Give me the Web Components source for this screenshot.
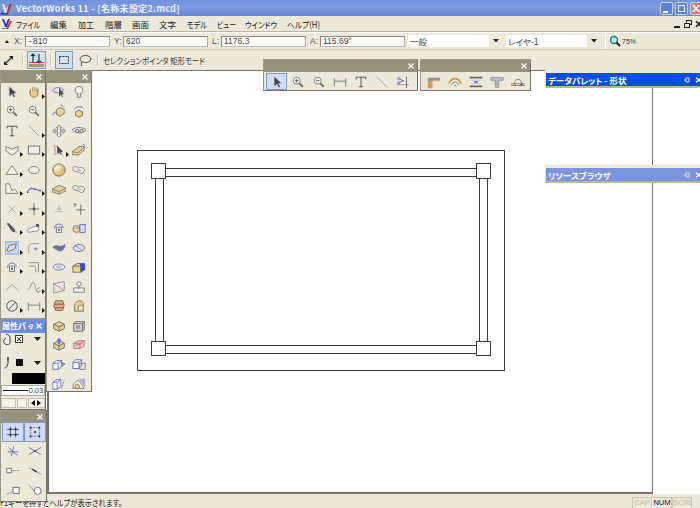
<!DOCTYPE html>
<html lang="ja"><head><meta charset="utf-8"><title>VectorWorks 11</title>
<style>html,body{margin:0;padding:0;width:700px;height:508px;overflow:hidden;background:#ece9d8;font-family:"Liberation Sans","Noto Sans CJK JP",sans-serif}</style></head>
<body>
<vw-app>
  <vw-titlebar slot="title">VectorWorks 11 - [名称未設定2.mcd]</vw-titlebar>
  <vw-menubar slot="menu">
    <vw-menu-item w="24" m="16">ファイル</vw-menu-item>
    <vw-menu-item w="17" m="10">編集</vw-menu-item>
    <vw-menu-item w="16" m="11">加工</vw-menu-item>
    <vw-menu-item w="17" m="11">階層</vw-menu-item>
    <vw-menu-item w="17" m="10">画面</vw-menu-item>
    <vw-menu-item w="17" m="10">文字</vw-menu-item>
    <vw-menu-item w="20" m="11">モデル</vw-menu-item>
    <vw-menu-item w="19" m="10">ビュー</vw-menu-item>
    <vw-menu-item w="32" m="9">ウインドウ</vw-menu-item>
    <vw-menu-item w="33" m="10">ヘルプ(H)</vw-menu-item>
  </vw-menubar>
  <vw-databar slot="data">
    <vw-field label="X:" lw="11" value="−810"></vw-field>
    <vw-field label="Y:" lw="9" value="620"></vw-field>
    <vw-field label="L:" lw="9" value="1176.3"></vw-field>
    <vw-field label="A:" lw="10" value="115.69°"></vw-field>
    <vw-select value="一般"></vw-select>
    <vw-select value="レイヤ-1"></vw-select>
    <vw-zoomview>75%</vw-zoomview>
  </vw-databar>
  <vw-modebar slot="mode">セレクションポインタ 矩形モード</vw-modebar>
  <vw-workspace slot="work">
    <vw-palette x="0" y="0" w="46" h="250" cols="22" close>
      <vw-tool i="arrow"></vw-tool><vw-tool i="hand" more></vw-tool>
      <vw-tool i="zin"></vw-tool><vw-tool i="zout"></vw-tool>
      <vw-tool i="text"></vw-tool><vw-tool i="line" more></vw-tool>
      <vw-tool i="shield" more></vw-tool><vw-tool i="rect" more></vw-tool>
      <vw-tool i="tri" more></vw-tool><vw-tool i="oval"></vw-tool>
      <vw-tool i="poly" more></vw-tool><vw-tool i="bcurve" more></vw-tool>
      <vw-tool i="x" more></vw-tool><vw-tool i="star" more></vw-tool>
      <vw-tool i="drop" more></vw-tool><vw-tool i="wedge" more></vw-tool>
      <vw-tool i="selp" more></vw-tool><vw-tool i="fillet" more></vw-tool>
      <vw-tool i="rot" more></vw-tool><vw-tool i="corner" more></vw-tool>
      <vw-tool i="chev"></vw-tool><vw-tool i="wave" more></vw-tool>
      <vw-tool i="slash" more></vw-tool><vw-tool i="dim" more></vw-tool>
    </vw-palette>
    <vw-palette x="46" y="0" w="46" h="322" cols="20" close>
      <vw-tool i="wand"></vw-tool><vw-tool i="bulb"></vw-tool>
      <vw-tool i="cubea"></vw-tool><vw-tool i="cubeb"></vw-tool>
      <vw-tool i="arrows"></vw-tool><vw-tool i="eye"></vw-tool>
      <vw-tool i="redarrow" more></vw-tool><vw-tool i="slab"></vw-tool>
      <vw-tool i="sphere"></vw-tool><vw-tool i="blob"></vw-tool>
      <vw-tool i="plate"></vw-tool><vw-tool i="blob"></vw-tool>
      <vw-tool i="small"></vw-tool><vw-tool i="starb"></vw-tool>
      <vw-tool i="rota"></vw-tool><vw-tool i="swatch"></vw-tool>
      <vw-tool i="leaf"></vw-tool><vw-tool i="lens"></vw-tool>
      <vw-tool i="lens2"></vw-tool><vw-tool i="bcube"></vw-tool>
      <vw-tool i="flag"></vw-tool><vw-tool i="book"></vw-tool>
      <vw-tool i="coil"></vw-tool><vw-tool i="roll"></vw-tool>
      <vw-tool i="cubec"></vw-tool><vw-tool i="cubed"></vw-tool>
      <vw-tool i="cubeup"></vw-tool><vw-tool i="pinkcube"></vw-tool>
      <vw-tool i="wire1"></vw-tool><vw-tool i="wire2"></vw-tool>
      <vw-tool i="wire3"></vw-tool><vw-tool i="pie"></vw-tool>
    </vw-palette>
    <vw-palette x="0" y="248" w="46" h="92" cols="46" title="属性パ" pin blue close>
      <vw-attrs></vw-attrs>
    </vw-palette>
    <vw-palette x="0" y="340" w="47" h="92" cols="22" close>
      <vw-tool i="snapgrid" on></vw-tool><vw-tool i="snappt" on></vw-tool>
      <vw-tool i="snapstar"></vw-tool><vw-tool i="snapx"></vw-tool>
      <vw-tool i="snapdash"></vw-tool><vw-tool i="snapline"></vw-tool>
      <vw-tool i="snapbox"></vw-tool><vw-tool i="snaphex"></vw-tool>
    </vw-palette>
    <vw-palette x="263" y="-11" w="155" h="32" cols="21" close wide>
      <vw-tool i="arrow" on></vw-tool><vw-tool i="zin"></vw-tool><vw-tool i="zout"></vw-tool><vw-tool i="dim"></vw-tool><vw-tool i="text"></vw-tool><vw-tool i="line"></vw-tool><vw-tool i="trim"></vw-tool>
    </vw-palette>
    <vw-palette x="420" y="-11" w="111" h="32" cols="21" close wide>
      <vw-tool i="wall"></vw-tool><vw-tool i="arcw"></vw-tool><vw-tool i="ibeam"></vw-tool><vw-tool i="tbeam"></vw-tool><vw-tool i="join"></vw-tool>
    </vw-palette>
    <vw-dock y="0" w="155" active title="データパレット - 形状"></vw-dock>
    <vw-dock y="95" w="155" title="リソースブラウザ"></vw-dock>
    <vw-canvas></vw-canvas>
  </vw-workspace>
  <vw-statusbar slot="status">F1キーを押すとヘルプが表示されます。</vw-statusbar>
</vw-app>

<script>
const S='#555',B='#5a60d8',Y='#ecd090',P='#f4a0b0';
const cube=(f,t='#fff')=>`<path d="M2 6l6-3 6 3v5l-6 3-6-3z" fill="${f}" stroke="#666"/><path d="M2 6l6 3 6-3M8 9v5" fill="none" stroke="#666"/>`;
const ICONS={
arrow:`<path d="M5 2v11l3-3 2 4 1.500-.7-2-4h3.500z" fill="#444"/>`,
hand:`<path d="M4 8V4.500M6.500 7V2.500M9 7V2.500M11.500 8V4M4 8l-1.500-1M3 8c0 3 2 6 5 6s4.500-2 4.500-5V5" fill="${Y}" stroke="#8a7a40"/>`,
zin:`<circle cx="6.500" cy="6.500" r="4" fill="#f2f2ea" stroke="#777"/><path d="M9.500 9.500l4 4" stroke="#666" stroke-width="2"/><path d="M4.500 6.500h4M6.500 4.500v4" stroke="#555"/>`,
zout:`<circle cx="6.500" cy="6.500" r="4" fill="#f2f2ea" stroke="#777"/><path d="M9.500 9.500l4 4" stroke="#666" stroke-width="2"/><path d="M4.500 6.500h4" stroke="#555"/>`,
text:`<path d="M2.500 5V2.500h11V5M8 2.500v11M5.500 13.500h5" fill="none" stroke="#444"/>`,
line:`<path d="M2 2l12 12" stroke="#999"/>`,
shield:`<path d="M1 4l7 3 7-3v5l-7 5-7-5z" fill="#f2f0e4" stroke="#777"/>`,
rect:`<rect x="1.500" y="3.500" width="13" height="9" fill="#f2f0e4" stroke="#666"/>`,
tri:`<path d="M1 13L8 3l7 10z" fill="#f2f0e4" stroke="#777"/>`,
oval:`<ellipse cx="8" cy="8" rx="6" ry="4" fill="#f2f0e4" stroke="#777"/>`,
poly:`<path d="M1 2v11h14l-4-5-3 2-3-8z" fill="#f2f0e4" stroke="#777"/>`,
bcurve:`<path d="M0 12c3-6 5-5 8-4s4 1 8 2" fill="none" stroke="${B}" stroke-width="1.200"/><path d="M0 12h1.500M8 8h1.500M14 10h1.500" stroke="#222"/>`,
x:`<path d="M4 4l8 8M12 4l-8 8" stroke="#aaa"/>`,
star:`<path d="M8 1v14M2 8h12" stroke="#666"/><path d="M6.500 6.500h3v3h-3z" fill="#555"/>`,
drop:`<path d="M2 3l2-1 7 7 1 4-4-1z" fill="#555"/><path d="M11 10l3 4" stroke="#aaa"/>`,
wedge:`<path d="M1 13V9l9-3h3v5z" fill="#fff" stroke="#888"/><circle cx="12" cy="5" r="2" fill="#555"/>`,
selp:`<rect x="0" y="1" width="16" height="14" fill="#c8d8f4" stroke="#7a9ad8"/><path d="M2 11l3-6 8-2-2 6-7 3z" fill="#ddd" stroke="#666"/>`,
fillet:`<path d="M2 14V7c0-3 2-4 5-4h7" fill="none" stroke="#888"/><path d="M8 9h4M10 7v4" stroke="${B}"/>`,
rot:`<path d="M3 9a5 5 0 0 1 10-1" fill="none" stroke="${B}"/><rect x="5" y="7" width="6" height="6" fill="#f2f0e4" stroke="#777"/><circle cx="8" cy="10" r="1.400" fill="#668"/>`,
corner:`<path d="M2 3h11v11M2 7h6c2 0 2 2 2 7" fill="none" stroke="#888"/>`,
chev:`<path d="M1 12l7-7 7 7" fill="none" stroke="#999"/>`,
wave:`<path d="M1 11c3 0 3-8 6-8s2 9 4 8 3-3 4-2" fill="none" stroke="#888"/><path d="M10 12l3 2 2-2" fill="none" stroke="#666"/>`,
slash:`<circle cx="8" cy="8" r="6" fill="#f2f0e4" stroke="#666" stroke-width="1.200"/><path d="M4 12l8-8" stroke="#666" stroke-width="1.200"/>`,
dim:`<path d="M1.500 4v9M14.500 4v9M1.500 7h13" fill="none" stroke="#777"/>`,
trim:`<path d="M1 11h14" stroke="#999"/><path d="M12 2v13" stroke="#666"/><path d="M3 4l6 3M3 9l6-3" stroke="${B}"/><circle cx="3" cy="4" r="1.300" fill="#fff" stroke="${B}"/><circle cx="3" cy="9" r="1.300" fill="#fff" stroke="${B}"/>`,
wand:`<ellipse cx="7" cy="6" rx="6" ry="3" fill="none" stroke="${B}"/><path d="M8 3v10l2-2 1.500 3 1-.5-1.500-3h3z" fill="#555"/>`,
bulb:`<circle cx="8" cy="6" r="4.500" fill="#f4f2e2" stroke="#777"/><path d="M6 10v4h4v-4" fill="#ddd" stroke="#777"/>`,
cubea:`<path d="M5 7l4-3 5 2v5l-5 3-4-2z" fill="${Y}" stroke="#777"/><path d="M1 13c0-3 2-4 4-4M13 3l-3-2" fill="none" stroke="${B}"/>`,
cubeb:`<path d="M4 9l4-2 4 2v4l-4 2-4-2z" fill="${Y}" stroke="#666"/><path d="M3 6c0-3 8-4 10-1" fill="none" stroke="${B}"/>`,
arrows:`<path d="M8 1l3 3H9.500v3H13V5.500l2 2.500-2 2.500V9H9.500v3H11l-3 3-3-3h1.500V9H3v1.500L1 8l2-2.500V7h3.500V4H5z" fill="#f2f0e4" stroke="#777"/>`,
eye:`<path d="M0 7c3-4 13-4 16 0-3 4-13 4-16 0z" fill="#f2f0e4" stroke="#777"/><circle cx="6" cy="8" r="2" fill="#ddd" stroke="#666"/><circle cx="11" cy="8" r="2" fill="#ddd" stroke="#666"/>`,
redarrow:`<path d="M2 2c2 4 2 8 1 12M5 3l5 10" stroke="#d86080" fill="none"/><path d="M6 3v10l2.500-2.500 1.500 3 1.300-.6-1.500-3h3z" fill="#445"/>`,
slab:`<path d="M0 10l8-6h6v4l-7 6-7-1z" fill="${Y}" stroke="#777"/><path d="M0 10l7 1 7-6" fill="none" stroke="#777"/><path d="M12 1l3 2" stroke="${B}"/>`,
sphere:`<defs><radialGradient id="sg" cx=".35" cy=".3"><stop offset="0" stop-color="#fff8e4"/><stop offset="1" stop-color="#e4c078"/></radialGradient></defs><circle cx="8" cy="8" r="7" fill="url(#sg)" stroke="#666"/>`,
blob:`<path d="M1 6c0-2 4-3 5-1s2 0 4 0 6 2 4 4 0 3-3 3-2-2-5-2-5-2-5-4z" fill="#f2f0e4" stroke="#777"/><path d="M5 7c2 2 4 0 6 2" fill="none" stroke="#999"/>`,
plate:`<path d="M0 8l8-4 8 3v3l-8 4-8-3z" fill="${Y}" stroke="#777"/><path d="M0 8l8 3 8-4M8 11v3" fill="none" stroke="#777"/>`,
small:`<path d="M8 3v8M3 11h10" stroke="#bbb"/><path d="M6 9l2-3 2 3" fill="none" stroke="#999"/>`,
starb:`<path d="M10 3v12M5 9h10" stroke="#666"/><path d="M2 2l3 3M5 2L2 5" stroke="#777" stroke-width="1.300"/>`,
rota:`<path d="M3 9a5 5 0 0 1 10-1" fill="none" stroke="${B}"/><rect x="5" y="7" width="6" height="6" fill="#f2f0e4" stroke="#778"/><circle cx="8" cy="10" r="1.300" fill="#668"/>`,
swatch:`<circle cx="5" cy="9" r="4" fill="${Y}" stroke="#777"/><rect x="9" y="4" width="6" height="9" fill="#cfe0f8" stroke="${B}"/><path d="M9 8h-4" stroke="#668"/>`,
leaf:`<path d="M1 7c5-4 8 2 14-3-1 6-4 8-7 7S4 9 1 7z" fill="#778" stroke="${B}"/>`,
lens:`<ellipse cx="8" cy="8" rx="6.500" ry="4" fill="#dde4f4" stroke="#668"/><path d="M3 5l9 6" stroke="#88a"/>`,
lens2:`<ellipse cx="8" cy="8" rx="6.500" ry="3.500" fill="#eef" stroke="#778"/><path d="M5 7h6M5 9h6" stroke="#99b"/>`,
bcube:`<path d="M1 7l5-3h8v7l-4 3H1z" fill="${Y}" stroke="#666"/><path d="M9 4h6v7l-5 3z" fill="#3a50d0"/><path d="M1 7h9v7" fill="none" stroke="#666"/>`,
flag:`<path d="M2 4l12-2v10l-12 3z" fill="#f4dede" stroke="#888"/><path d="M2 4l12 8" stroke="#b88"/>`,
book:`<circle cx="8" cy="4.500" r="2.500" fill="#f4f0dc" stroke="#777"/><path d="M2 9h12v5H2z" fill="#f2f0e4" stroke="#777"/><path d="M8 7v3" stroke="${B}"/>`,
coil:`<path d="M4 2h8l2 5-2 6H4L2 8z" fill="#e0b478" stroke="#755"/><path d="M3 6h10M3 10h10" stroke="#755"/>`,
roll:`<path d="M3 14V7c0-3 3-5 6-5s4 2 4 5v7z" fill="${Y}" stroke="#776"/><path d="M7 14V9c0-2 6-2 6 0" fill="#f2f0e4" stroke="#776"/>`,
cubec:cube(Y),
cubed:`<path d="M2 5h10l2-2v9l-2 2H2z" fill="#ccc" stroke="#666"/><path d="M2 5l2-2h10M12 5v9" fill="none" stroke="#666"/><rect x="5" y="7" width="4" height="4" fill="#999"/>`,
cubeup:cube(Y)+`<path d="M8 0l3 3H9v4H7V3H5z" fill="${B}"/>`,
pinkcube:`<path d="M2 6l5-3h7v6l-5 3H2z" fill="#f0c8d0" stroke="#a77"/><path d="M2 6h7v6M9 6l5-3" fill="none" stroke="#a77"/><path d="M3 9c3-2 6-1 9-3" stroke="#c66" fill="none"/>`,
wire1:`<path d="M1 6l4-3h6v7l-4 3H1z" fill="#fff" stroke="${B}"/><path d="M1 6h6v7M7 6l4-3" fill="none" stroke="${B}"/><path d="M11 5l4 2-4 2" fill="#999" stroke="#777"/>`,
wire2:`<path d="M1 5l3-3h7v7l-3 3H1z" fill="#fff" stroke="${B}"/><path d="M1 5h7v7M8 5l3-3" fill="none" stroke="${B}"/><rect x="9" y="6" width="6" height="7" fill="none" stroke="#777"/>`,
wire3:`<path d="M1 6l4-3h5v8l-4 3H1z" fill="#fff" stroke="${B}"/><path d="M1 6h5v8M6 6l4-3" fill="none" stroke="${B}"/><path d="M11 13l3-10" stroke="#999"/>`,
pie:`<path d="M1 13c0-5 3-9 7-9l6 9z" fill="#f4f0e8" stroke="#777"/><path d="M8 2h7v10z" fill="#b0a8e8"/><circle cx="6" cy="11" r="2.500" fill="${Y}" stroke="#776"/>`,
snapgrid:`<path d="M5 2v12M11 2v12M1 5h14M1 11h14" stroke="#556"/><g fill="#223"><rect x="4" y="4" width="2" height="2"/><rect x="10" y="4" width="2" height="2"/><rect x="4" y="10" width="2" height="2"/><rect x="10" y="10" width="2" height="2"/></g>`,
snappt:`<rect x="3" y="3" width="10" height="10" fill="none" stroke="#778" stroke-dasharray="2 1"/><g fill="#223"><rect x="2" y="2" width="2" height="2"/><rect x="12" y="2" width="2" height="2"/><rect x="2" y="12" width="2" height="2"/><rect x="12" y="12" width="2" height="2"/><rect x="7" y="7" width="2" height="2"/></g>`,
snapstar:`<path d="M2 9h12M9 2L6 14M3 4l10 9" stroke="${B}"/>`,
snapx:`<path d="M1 4l14 8M1 12l14-8" stroke="#667"/><circle cx="8" cy="8" r="1" fill="#223"/>`,
snapdash:`<rect x="1" y="5" width="5" height="5" fill="#fff" stroke="#666"/><path d="M7 7.500h8" stroke="#779" stroke-dasharray="2 1"/>`,
snapline:`<path d="M1 4l14 8" stroke="#889"/><path d="M5 6l5 3" stroke="#334" stroke-width="1.600"/>`,
snapbox:`<path d="M1 13l8-4" stroke="#888"/><rect x="8" y="5" width="7" height="7" fill="#fff" stroke="#666"/>`,
snaphex:`<path d="M1 2l9 11" stroke="#888"/><circle cx="11" cy="9" r="4" fill="#fff" stroke="#666"/>`,
wall:`<path d="M1 3h14v4H6v8H1z" fill="#9a9688"/><rect x="1" y="7" width="5" height="8" fill="#dc9a60"/><path d="M6 7h9" stroke="#e0d8a0" stroke-width="1.500"/>`,
arcw:`<path d="M1 10c3-8 11-8 14 0" fill="none" stroke="#d09a40" stroke-width="2"/><path d="M4 11c2-4 6-4 8 0" fill="none" stroke="#666"/><path d="M6 13l2-2 2 2" fill="none" stroke="#777"/>`,
ibeam:`<path d="M1 3h14M1 13h14" stroke="#666" stroke-width="2"/><path d="M3 6h10M3 10h10" stroke="#bbb"/><path d="M6 8h4" stroke="${B}" stroke-width="2"/>`,
tbeam:`<path d="M1 3h14v3h-5v8H6V6H1z" fill="#c4c4d0" stroke="#889"/><path d="M8 6v8" stroke="#99b"/>`,
join:`<path d="M0 10h16M0 12h16" stroke="#777"/><path d="M4 10a4 5 0 0 1 8 0" fill="none" stroke="#777"/><circle cx="4" cy="11" r="1.500" fill="#c89030"/><circle cx="12" cy="11" r="1.500" fill="#666"/>`
};
function def(name,html,init){customElements.define(name,class extends HTMLElement{
  constructor(){super();this.attachShadow({mode:'open'}).innerHTML=html}
  connectedCallback(){init&&init.call(this,this.shadowRoot)}
})}
const JP='"Noto Sans CJK JP","Liberation Sans",sans-serif';

def('vw-app',`<style>:host{display:flex;flex-direction:column;width:700px;height:508px;overflow:hidden;background:#ece9d8}</style>
<slot name="title"></slot><slot name="menu"></slot><slot name="data"></slot><slot name="mode"></slot><slot name="work"></slot><slot name="status"></slot>`);

def('vw-titlebar',`<style>:host{display:flex;align-items:center;height:16px;flex:none;background:linear-gradient(#6f92dc,#7c9ae0 50%,#6688d4);color:#f4f6ff;font:bold 9px ${JP};letter-spacing:.3px;white-space:nowrap}
svg.l{margin:0 3px 0 1px;flex:none}.t{flex:1;opacity:.92}.b{display:flex;gap:2px;flex:none}
.b i{display:block;width:13px;height:13px;border:1px solid #c8d4f4;border-radius:2px;box-sizing:border-box;background:#5d82dc;position:relative}
.b i.c{background:#d87a70;width:10px;border-right:0;border-radius:2px 0 0 2px}
.b svg{position:absolute;left:0;top:0}</style>
<svg class="l" width="12" height="13" viewBox="0 0 12 13"><path d="M1 2l3 9h2l4-9H8L5 8 3 2z" fill="#f4f4ff"/><path d="M8 2h3L7 12H5z" fill="#c03030"/><path d="M0 11h7v1.500H0z" fill="#2040a0"/></svg>
<span class="t"><slot></slot></span>
<span class="b"><i><svg width="11" height="11"><rect x="2" y="8" width="5" height="2" fill="#fff"/></svg></i><i><svg width="11" height="11"><rect x="2.500" y="2.500" width="6" height="6" fill="none" stroke="#fff"/><path d="M2 2.500h7" stroke="#fff"/></svg></i><i class="c"><svg width="9" height="11"><path d="M2 2l6 7M8 2L2 9" stroke="#fff" stroke-width="1.600"/></svg></i></span>`);

def('vw-menubar',`<style>:host{display:flex;align-items:center;height:16px;flex:none;box-sizing:border-box;border-bottom:1px solid #b8b5a4;background:#ece9d8;position:relative}
svg.l{position:absolute;left:1px;top:2px}.e{margin-left:auto;flex:none;margin-right:-1px}</style>
<svg class="l" width="11" height="12" viewBox="0 0 11 12"><path d="M1 1l3 8h2l3-8H7L5 6 3 1z" fill="#3040b0"/><path d="M5 11L9 3h2L7 11z" fill="#c03030"/><path d="M1 10h5v1H1z" fill="#888"/></svg>
<slot></slot>
<svg class="e" width="28" height="12" viewBox="0 0 28 12"><path d="M1 9h6" stroke="#222" stroke-width="2"/><rect x="13.500" y="2.500" width="5" height="4" fill="none" stroke="#222"/><rect x="11.500" y="5.500" width="5" height="4" fill="#ece9d8" stroke="#222"/><path d="M23 3l5 6M28 3l-5 6" stroke="#222" stroke-width="1.400"/></svg>`);

def('vw-menu-item',`<style>:host{display:block;flex:none;font:8.500px/16px ${JP};color:#222;white-space:nowrap;font-feature-settings:"palt"}
span{display:inline-block;transform-origin:0 50%}</style><span><slot></slot></span>`,function(r){
  this.style.width=this.getAttribute('w')+'px';this.style.marginLeft=this.getAttribute('m')+'px';
  const s=r.querySelector('span');const w=+this.getAttribute('w');
  const k=w/s.getBoundingClientRect().width;if(k&&k<1&&isFinite(k))s.style.transform=`scaleX(${k})`;
});

def('vw-databar',`<style>:host{display:flex;align-items:center;height:18px;flex:none;box-sizing:border-box;border-top:1px solid #fff;border-bottom:1px solid #cbc8b6;background:#ece9d8;padding-left:5px;gap:4px}
svg{flex:none;margin-right:1px}</style><svg width="4" height="4"><path d="M0 4l2-3 2 3z" fill="#222"/></svg><slot></slot>`);

def('vw-field',`<style>:host{display:flex;align-items:center;flex:none;font:8.500px/11px "Liberation Sans",sans-serif;color:#555}
.v{width:85px;height:11px;box-sizing:border-box;background:#fff;border:1px solid #8a887a;border-right-color:#aaa;border-bottom-color:#bbb;color:#444;padding-left:2px;line-height:9px;white-space:nowrap;overflow:hidden}</style>
<span class="l"></span><span class="v"></span>`,function(r){
  const l=r.querySelector('.l');l.textContent=this.getAttribute('label');l.style.width=this.getAttribute('lw')+'px';
  r.querySelector('.v').textContent=this.getAttribute('value');
});

def('vw-select',`<style>:host{display:flex;align-items:center;flex:none;width:95px;height:12px;background:#f8f8f4;margin-left:-1px;font:8.500px/12px ${JP};color:#444}
.v{flex:1;padding-left:2px;overflow:hidden;white-space:nowrap;background:#fff;height:12px;font-feature-settings:"palt"}.a{width:14px;height:12px;display:flex;align-items:center;justify-content:center;background:#ece9d8}
</style><span class="v"></span><span class="a"><svg width="6" height="4"><path d="M0 0h6L3 3.500z" fill="#222"/></svg></span>`,function(r){r.querySelector('.v').textContent=this.getAttribute('value')});

def('vw-zoomview',`<style>:host{display:flex;align-items:center;gap:1px;flex:1;height:16px;margin-left:0;padding-left:3px;border-left:1px solid #fff;font:7px "Liberation Sans",sans-serif;color:#333}</style>
<svg width="12" height="12" viewBox="0 0 12 12"><circle cx="5" cy="5" r="3.500" fill="#bfe8e0" stroke="#108878" stroke-width="1.400"/><path d="M7.500 7.500l3.500 3.500" stroke="#222" stroke-width="2"/></svg><slot></slot>`);

def('vw-modebar',`<style>:host{display:flex;align-items:center;height:20px;flex:none;box-sizing:border-box;background:#ece9d8;font:8.500px ${JP};color:#333;white-space:nowrap;font-feature-settings:"palt"}
.s{flex:none;width:1px;height:12px;background:#c6c3b0;border-right:1px solid #fff}
.on{flex:none;box-sizing:border-box;display:flex;align-items:center;justify-content:center;height:18px;background:#d4e0f4;border:1px solid #7f9cc8}
svg{display:block;flex:none}.t{display:inline-block;transform-origin:0 50%;margin-left:4px}</style>
<svg style="margin-left:3px" width="11" height="11" viewBox="0 0 11 11"><path d="M2 9l7-7" stroke="#333" stroke-width="1.300"/><path d="M1 10V6l4 4zM10 1v4L6 1z" fill="#222"/></svg>
<span class="s" style="margin-left:8px"></span>
<span class="on" style="width:19px;margin-left:3px"><svg width="15" height="16" viewBox="0 0 15 16"><path d="M0 12h15v3H0z" fill="#a89870"/><path d="M4 2v9M2 4l2-2 2 2M10 11V2M8 9l2 2 2-2" fill="none" stroke="#234" stroke-width="1.200"/><path d="M0 10.500h15" stroke="#b04030"/></svg></span>
<span class="s" style="margin-left:4px"></span>
<span class="on" style="width:18px;margin-left:3px"><svg width="12" height="12" viewBox="0 0 12 12"><rect x="1.500" y="2.500" width="9" height="7" fill="none" stroke="#333" stroke-dasharray="2 1"/></svg></span>
<svg style="margin-left:5px" width="14" height="13" viewBox="0 0 14 13"><ellipse cx="7.500" cy="5" rx="5.500" ry="3.500" fill="none" stroke="#444"/><path d="M4 8c-1 1-1 3 0 4" fill="none" stroke="#444"/></svg>
<span class="s" style="margin-left:5px"></span>
<span class="t"><slot></slot></span>`,function(r){
  const t=r.querySelector('.t');const k=102/t.getBoundingClientRect().width;if(k<1)t.style.transform=`scaleX(${k})`;
});

def('vw-workspace',`<style>:host{display:flex;flex:1;min-height:0;position:relative;background:#fff;border-top:0}</style><slot></slot>`);

def('vw-canvas',`<style>:host{display:block;margin-left:47px;width:606px;box-sizing:border-box;border:2px solid #77756a;border-top:1px solid #77756a;border-right-width:1px;background:#fff}
svg{display:block}</style>
<svg width="603" height="421" viewBox="49 71 603 421" shape-rendering="crispEdges" fill="none" stroke="#3a3a3a">
<rect x="137.500" y="150.500" width="367" height="220"/>
<g fill="#fff"><path d="M166 168.500h310M166 176.500h310M166 345.500h310M166 353.500h310M155.500 178v163M163.500 178v163M479.500 178v163M487.500 178v163"/>
<rect x="151.500" y="163.500" width="14" height="15"/><rect x="476.500" y="163.500" width="14" height="15"/><rect x="151.500" y="341.500" width="14" height="14"/><rect x="476.500" y="341.500" width="14" height="14"/></g></svg>`);

def('vw-palette',`<style>:host{display:block;position:absolute;z-index:2;box-sizing:border-box;background:#ece9d8;border:1px solid #9a9786;border-right-color:#77756a;border-bottom-color:#77756a;overflow:hidden}
.h{display:flex;align-items:center;height:12px;background:#96927e;color:#fff;font:bold 8px/12px ${JP};padding-left:1px;white-space:nowrap;overflow:hidden;font-feature-settings:"palt"}
.h.blue{background:#6d8fe0;height:14px}.n{flex:1}.c{flex:none;margin-right:3px}.p{flex:none;margin-right:2px;display:none}:host([pin]) .p{display:block}
.g{display:grid;justify-content:center;grid-auto-rows:19.500px;margin-top:-1px}
:host([wide]) .g{margin-top:0;padding-top:1px;justify-content:flex-start;padding-left:2px;grid-auto-flow:column;grid-auto-columns:21.200px;grid-template-rows:17px;grid-auto-rows:17px}</style>
<div class="h"><span class="n"></span><svg class="p" width="7" height="7" viewBox="0 0 7 7"><path d="M1 3.500h2M3 1.500h2v4H3zM5 2.500h1" stroke="#fff" fill="none"/></svg><svg class="c" width="6" height="6" viewBox="0 0 6 6"><path d="M.5.500l5 5M5.500.500l-5 5" stroke="#fff" stroke-width="1.200"/></svg></div>
<div class="g"><slot></slot></div>`,function(r){
  const a=n=>this.getAttribute(n);
  Object.assign(this.style,{left:a('x')+'px',top:a('y')+'px',width:a('w')+'px',height:a('h')+'px'});
  r.querySelector('.n').textContent=a('title')||'';
  if(this.hasAttribute('blue'))r.querySelector('.h').classList.add('blue');
  r.querySelector('.g').style.gridTemplateColumns=`repeat(auto-fill,${a('cols')}px)`;
  if(!this.hasAttribute('wide'))r.querySelector('.g').style.width=(+a('w')-2)+'px';
  if(a('title')==='属性パ'){const g=r.querySelector('.g');g.style.display='block';g.style.marginTop='0'}
});

def('vw-tool',`<style>:host{display:flex;align-items:center;justify-content:center;position:relative;box-sizing:border-box;width:100%;height:100%}
:host([on]){background:#cfdcf2;outline:1px solid #7f9cc8;outline-offset:-1px}
.m{position:absolute;right:0;bottom:3px;display:none}:host([more]) .m{display:block}svg.i{display:block}</style>
<svg class="i" width="14" height="14" viewBox="0 0 16 16"></svg><svg class="m" width="3" height="5"><path d="M0 0l3 2.500L0 5z" fill="#111"/></svg>`,function(r){
  r.querySelector('.i').innerHTML=ICONS[this.getAttribute('i')]||'';
});

def('vw-attrs',`<style>:host{display:flex;flex-direction:column;width:44px;font:7.500px "Liberation Sans",sans-serif;color:#444}
.r{display:flex;align-items:center;height:12px;padding-left:2px}.a{margin-left:auto;margin-right:4px;display:block}
.k{height:11px;margin:3px 0 0 11px;background:#000;flex:none}
.w{display:flex;align-items:center;height:11px;margin-top:1px;background:#fff;border:1px solid #aaa;box-sizing:border-box;padding:0 1px}.w b{flex:1;height:1px;background:#222;margin-right:1px}.w span{letter-spacing:-.1px}
.bt{display:flex;gap:1px;margin-top:2px}.bt i{display:flex;align-items:center;justify-content:center;height:10px;flex:1;background:#f4f2e6;border:1px solid #c4c1ae;box-sizing:border-box}</style>
<div class="r"><svg width="20" height="12" viewBox="0 0 20 12"><path d="M3 1c2 1 4 1 4 4v5c0 2-5 2-6 0s0-4 2-5" fill="#f4f2e6" stroke="#333"/><rect x="12.500" y="2.500" width="7" height="7" fill="#fff" stroke="#333"/><path d="M14 4l4 4M18 4l-4 4" stroke="#333"/></svg><svg class="a" width="7" height="4"><path d="M0 0h7L3.500 4z" fill="#111"/></svg></div>
<div style="height:11px"></div>
<div class="r" style="height:14px"><svg width="22" height="14" viewBox="0 0 22 14"><path d="M4 1h2l-.5 7h-1z" fill="#555"/><path d="M4.500 8c0 3-2 4-3 4" fill="none" stroke="#333"/><rect x="13" y="3" width="7" height="7" fill="#111"/></svg><svg class="a" width="7" height="4"><path d="M0 0h7L3.500 4z" fill="#111"/></svg></div>
<div class="k"></div>
<div class="w"><b></b><span>0.03</span></div>
<div class="bt"><i></i><i style="flex:.6"></i><i style="flex:1.200"><svg width="12" height="6" viewBox="0 0 12 6"><path d="M5 0v6L1 3zM7 0v6l4-3z" fill="#111"/></svg></i></div>`);

def('vw-dock',`<style>:host{display:flex;align-items:center;position:absolute;z-index:2;left:545px;height:18px;box-sizing:border-box;background:#7a95dc;color:#fff;font:bold 8.500px/14px ${JP};border-left:1px solid #ece9d8;border-top:3px solid #ece9d8;border-bottom:2px solid #b8b5a4;padding-left:2px;white-space:nowrap;font-feature-settings:"palt"}
:host([active]){background:#0a4ede}.n{flex:1}svg{flex:none;margin-right:-1px}</style><span class="n"></span>
<svg width="18" height="8" viewBox="0 0 18 8"><path d="M1 4h2M3 2h3v4H3z" stroke="#dde" fill="none"/><path d="M13 1.500l5 5M18 1.500l-5 5" stroke="#fff" stroke-width="1.200"/></svg>`,function(r){
  r.querySelector('.n').textContent=this.getAttribute('title');
  this.style.top=this.getAttribute('y')+'px';this.style.width=this.getAttribute('w')+'px';
});

def('vw-statusbar',`<style>:host{display:flex;height:14px;flex:none;align-items:flex-end;background:#ece9d8;font:8.500px/11px ${JP};color:#222;white-space:nowrap;overflow:hidden}
.t{flex:1;font-feature-settings:"palt"}.t span{display:inline-block;transform-origin:0 50%;transform:scaleX(.86)}.k{display:flex;margin-right:8px;font:7.500px/10px "Liberation Sans",sans-serif}
.k span{box-sizing:border-box;height:11px;width:20px;text-align:center;border:1px solid #c8c5b2;border-bottom:0;color:#bcb9a6}.k .on{color:#111;border-left-color:#fff}</style>
<span class="t"><span><slot></slot></span></span><span class="k"><span>CAP</span><span class="on">NUM</span><span>SCRL</span></span>`);
</script>
</body></html>
